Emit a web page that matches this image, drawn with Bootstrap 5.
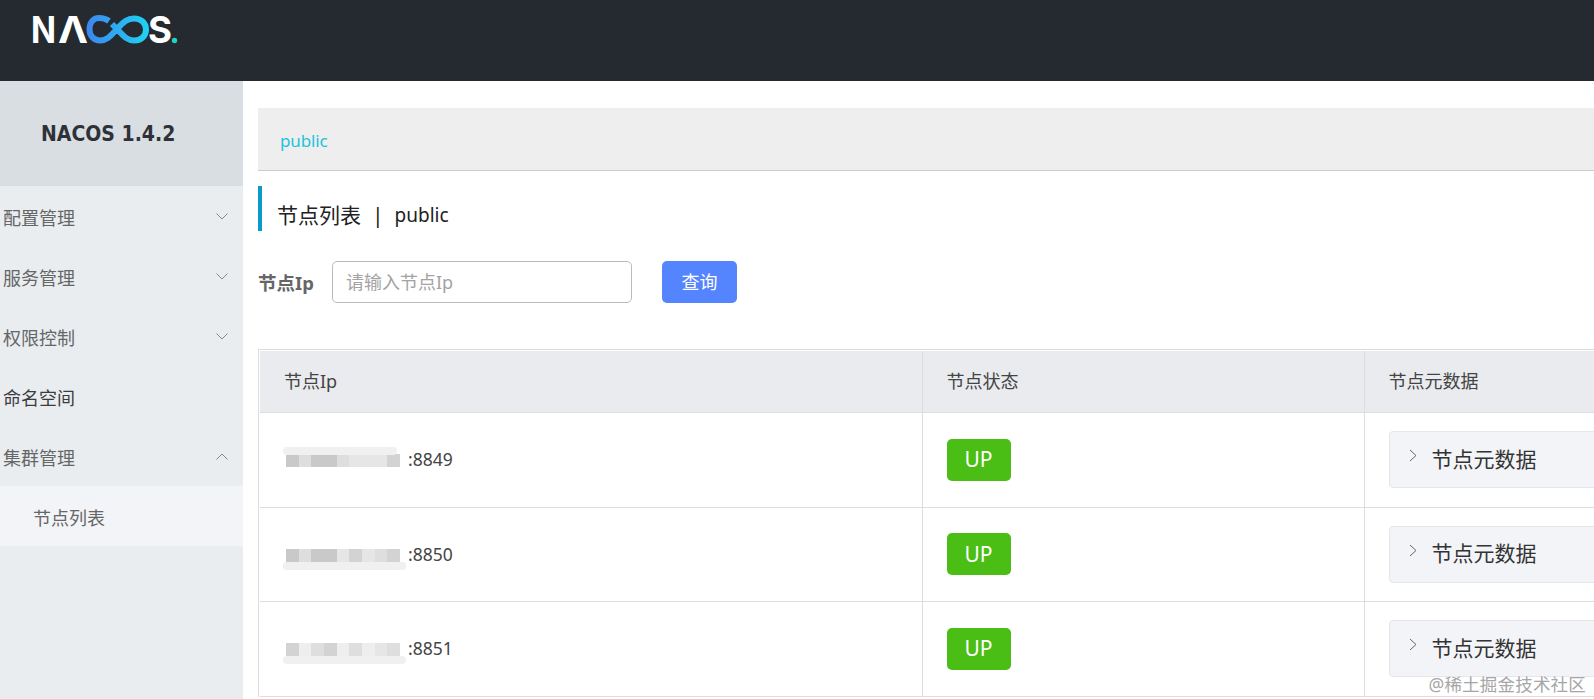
<!DOCTYPE html>
<html lang="zh-CN">
<head>
<meta charset="utf-8">
<title>Nacos 节点列表</title>
<link rel="stylesheet" href="https://cdn.jsdelivr.net/npm/bootstrap@5.3.0/dist/css/bootstrap.min.css">
<style>
html,body{height:699px;overflow:hidden;background:#fff}
body{font-family:"Noto Sans","Noto Sans CJK SC",sans-serif;font-size:18px;color:#333;line-height:1.3}
.topbar{height:81px;background:#242a30;padding:0;align-items:flex-start}
.logo-svg{display:block;width:200px;height:60px}
.logo-txt{font-family:"Inter",sans-serif;font-weight:700;font-size:37px;fill:#fff}
.shell{height:618px}
.sidemenu{width:243px;flex:none;background:#e9edf0}
.side-brand{height:105px;background:#d9dee2;font-family:"DejaVu Sans",sans-serif;font-stretch:condensed;font-weight:700;font-size:21px;color:#2e3238;padding-left:41px;padding-top:2px}
.side-row{height:60px;padding:0 15px 0 3px;color:#666}
.side-row span{padding-top:6px}
.side-row.plain{color:#3c3c3c}
.side-sub{height:60px;padding:6px 0 0 33px;background:#f2f4f7;color:#666}
.chev{width:12px;height:7px;display:block;fill:none;stroke:#888;stroke-width:1}
.content{flex:1;min-width:0;padding:27px 0 0 15px;overflow:hidden}
.ns-bar{height:63px;background:#eee;border-bottom:1px solid #ccc;padding-left:22px;padding-top:4px;color:#1cc3dc;font-size:17px;letter-spacing:-.15px}
.page-title{margin-top:15px;height:45px;border-left:4px solid #0b9bcb;padding-left:15px;padding-top:14px;font-size:21px;color:#222}
.page-title i{font-style:normal;margin:0 11px 0 11px}
.pt-en{font-size:19px}
.query-form{margin-top:30px;height:42px}
.query-label{width:74px;font-weight:700;color:#666;font-size:18.500px;padding-top:3px}
.query-input.form-control{width:300px;height:42px;border:1px solid #bbb;border-radius:5px;padding:0 13px;font-size:18px;box-shadow:none}
.query-input.form-control::placeholder{color:#a3a3a3}
.query-btn.btn{margin-left:30px;width:75px;height:42px;padding:0;background:#5584ff;border:0;border-radius:5px;font-size:18px;color:#fff}
.nodes-wrap{margin-top:46px;width:1600px;border-top:1px solid #ddd;border-left:1px solid #ddd;padding:1px 0 0 1px}
.nodes.table{table-layout:fixed;width:1599px;margin:0;border-color:#ddd;color:#444;font-size:18px}
.nodes.table th,.nodes.table td{padding:0 0 0 24px;vertical-align:middle;border:0 solid #ddd;border-right-width:1px;border-bottom-width:1px;box-shadow:none}
.nodes.table th{height:61px;background:#e9ebee;font-weight:400;color:#444;padding-top:1px}
.nodes.table tbody tr{height:95px}
.nodes.table tbody tr:nth-child(2){height:94px}
.col-ip{width:662px}
.col-st{width:442px}
.ip-cell{font-size:17.500px}
.ipmask{position:relative;width:114px;height:13px;margin:2px 8px 0 2px;filter:blur(.5px)}
.ipmask::before{content:"";position:absolute;left:-3px;height:8px;background:#f0f0f0;border-radius:4px}
.ipmask.over::before{top:-7px;right:3px}
.ipmask.under::before{top:13px;right:-6px}
.ipmask b{flex:1;height:13px}
.s1{background:#c9c9c9}
.s2{background:#d3d3d3}
.s3{background:#dedede}
.s4{background:#e6e6e6}
.s5{background:#eeeeee}
.up-tag.badge{width:64px;height:42px;background:#4abe14;color:#fff;border-radius:5px;font-size:21px;font-weight:400;padding:0;display:flex;align-items:center;justify-content:center}
.meta-box{width:300px;height:57px;background:#f2f4f7;border:1px solid #e4e6ea;border-radius:4px;padding-left:19px;font-size:21px;color:#333}
.meta-box svg{width:8px;height:13px;fill:none;stroke:#666;stroke-width:1;margin:-8px 15px 0 0;flex:none}
.jj-mark{position:absolute;right:8px;bottom:3px;font-size:17.500px;color:#a6a6a6;letter-spacing:.2px;text-shadow:0 0 3px #fff}
</style>
</head>
<body>
<nav class="navbar topbar">
  <svg class="logo-svg" viewBox="0 0 200 60" role="img" aria-label="NACOS">
    <defs><linearGradient id="inf" gradientUnits="userSpaceOnUse" x1="87" y1="0" x2="148" y2="0"><stop offset="0" stop-color="#3d86ee"/><stop offset="1" stop-color="#1fd2f2"/></linearGradient></defs>
    <text class="logo-txt" x="31" y="43" textLength="25" lengthAdjust="spacingAndGlyphs">N</text>
    <text class="logo-txt" x="58" y="43" textLength="30" lengthAdjust="spacingAndGlyphs">Λ</text>
    <path d="M109 21C105 18 101 18 99 18C93 18 89.500 23 89.500 29.500C89.500 36 94 40.500 100 40.500C108 40.500 112 34 117 29C122 24 126 18.500 134 18.500C141 18.500 146 23 146 29.500C146 36 141 40.500 134 40.500C126 40.500 122 34 117 29L112 24" fill="none" stroke="url(#inf)" stroke-width="6"/>
    <text class="logo-txt" x="148" y="43" textLength="24" lengthAdjust="spacingAndGlyphs">S</text>
    <circle cx="174.500" cy="40.500" r="2.700" fill="#1fd2c8"/>
  </svg>
</nav>
<div class="d-flex shell">
  <aside class="sidemenu">
    <div class="side-brand d-flex align-items-center">NACOS 1.4.2</div>
    <ul class="list-unstyled m-0">
      <li class="side-row d-flex align-items-center justify-content-between"><span>配置管理</span><svg class="chev" viewBox="0 0 12 7"><path d="M.5.500 6 6l5.500-5.500"/></svg></li>
      <li class="side-row d-flex align-items-center justify-content-between"><span>服务管理</span><svg class="chev" viewBox="0 0 12 7"><path d="M.5.500 6 6l5.500-5.500"/></svg></li>
      <li class="side-row d-flex align-items-center justify-content-between"><span>权限控制</span><svg class="chev" viewBox="0 0 12 7"><path d="M.5.500 6 6l5.500-5.500"/></svg></li>
      <li class="side-row plain d-flex align-items-center"><span>命名空间</span></li>
      <li class="side-row d-flex align-items-center justify-content-between"><span>集群管理</span><svg class="chev" viewBox="0 0 12 7"><path d="M.5 6.500 6 1l5.500 5.500"/></svg></li>
      <li class="side-sub d-flex align-items-center">节点列表</li>
    </ul>
  </aside>
  <main class="content">
    <div class="ns-bar d-flex align-items-center">public</div>
    <div class="page-title d-flex align-items-center"><span>节点列表</span><i>|</i><span class="pt-en">public</span></div>
    <form class="query-form d-flex align-items-center">
      <label class="query-label" for="ip">节点Ip</label>
      <input id="ip" class="form-control query-input" placeholder="请输入节点Ip">
      <button type="button" class="btn query-btn">查询</button>
    </form>
    <div class="nodes-wrap">
      <table class="table nodes">
        <colgroup><col class="col-ip"><col class="col-st"><col></colgroup>
        <thead><tr><th>节点Ip</th><th>节点状态</th><th>节点元数据</th></tr></thead>
        <tbody>
          <tr>
            <td><div class="ip-cell d-flex align-items-center"><div class="ipmask over d-flex"><b class="s1"></b><b class="s3"></b><b class="s1"></b><b class="s1"></b><b class="s3"></b><b class="s4"></b><b class="s4"></b><b class="s4"></b><b class="s2"></b></div>:8849</div></td>
            <td><span class="badge up-tag">UP</span></td>
            <td><div class="meta-box d-flex align-items-center"><svg viewBox="0 0 8 13"><path d="M1 1l6 5.500-6 5.500"/></svg>节点元数据</div></td>
          </tr>
          <tr>
            <td><div class="ip-cell d-flex align-items-center"><div class="ipmask under d-flex"><b class="s1"></b><b class="s3"></b><b class="s1"></b><b class="s1"></b><b class="s4"></b><b class="s2"></b><b class="s4"></b><b class="s3"></b><b class="s2"></b></div>:8850</div></td>
            <td><span class="badge up-tag">UP</span></td>
            <td><div class="meta-box d-flex align-items-center"><svg viewBox="0 0 8 13"><path d="M1 1l6 5.500-6 5.500"/></svg>节点元数据</div></td>
          </tr>
          <tr>
            <td><div class="ip-cell d-flex align-items-center"><div class="ipmask under d-flex"><b class="s2"></b><b class="s5"></b><b class="s3"></b><b class="s2"></b><b class="s5"></b><b class="s3"></b><b class="s5"></b><b class="s4"></b><b class="s3"></b></div>:8851</div></td>
            <td><span class="badge up-tag">UP</span></td>
            <td><div class="meta-box d-flex align-items-center"><svg viewBox="0 0 8 13"><path d="M1 1l6 5.500-6 5.500"/></svg>节点元数据</div></td>
          </tr>
        </tbody>
      </table>
    </div>
  </main>
</div>
<div class="jj-mark">@稀土掘金技术社区</div>
<script src="https://cdn.jsdelivr.net/npm/bootstrap@5.3.0/dist/js/bootstrap.bundle.min.js"></script>
</body>
</html>
